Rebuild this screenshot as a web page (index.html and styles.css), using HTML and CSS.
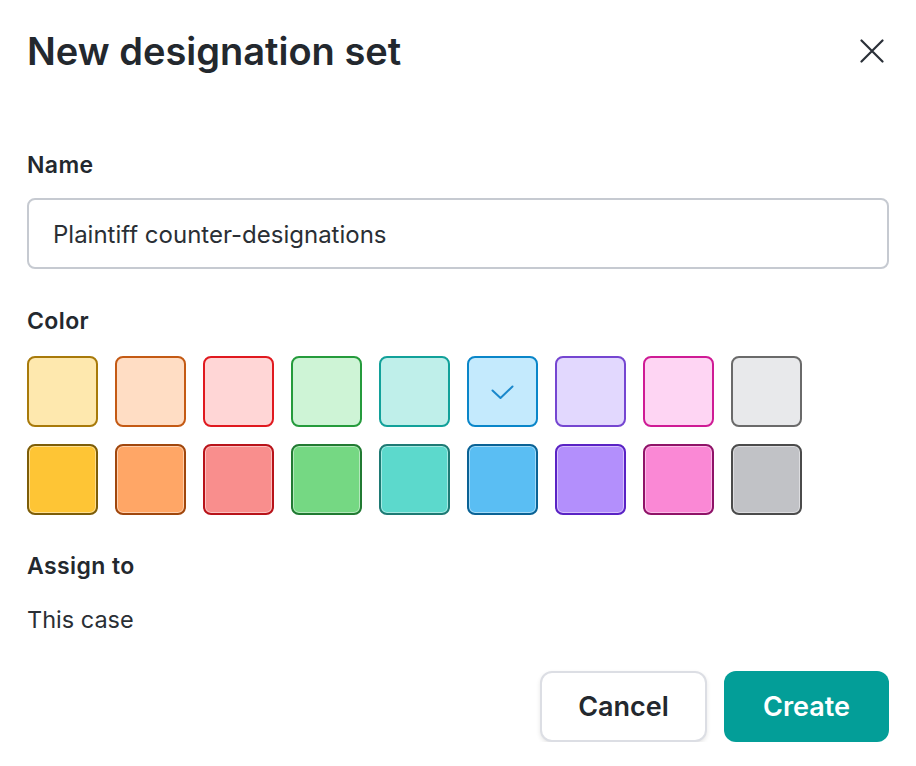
FILE: index.html
```html
<!DOCTYPE html>
<html lang="en">
<head>
<meta charset="utf-8">
<title>New designation set</title>
<link rel="stylesheet" href="styles.css">
</head>
<body>
<div class="dialog">
  <div class="header">
    <h1 class="title">New designation set</h1>
    <button class="close" aria-label="Close">
      <svg width="24" height="24" viewBox="0 0 24 24"><path d="M1.5 1.5 L22.5 22.5 M22.5 1.5 L1.5 22.5" stroke="#2a3038" stroke-width="2.2" stroke-linecap="round" fill="none"/></svg>
    </button>
  </div>

  <div class="label label-name">Name</div>
  <div class="input">Plaintiff counter-designations</div>

  <div class="label label-color">Color</div>
  <div class="swatches">
    <div class="sw l1"></div>
    <div class="sw l2"></div>
    <div class="sw l3"></div>
    <div class="sw l4"></div>
    <div class="sw l5"></div>
    <div class="sw l6 selected">
      <svg class="check" width="24" height="16" viewBox="0 0 24 16"><path d="M1.5 6.5 L9.5 14 L21.5 2.5" stroke="#1a88cc" stroke-width="2" fill="none" stroke-linecap="round" stroke-linejoin="round"/></svg>
    </div>
    <div class="sw l7"></div>
    <div class="sw l8"></div>
    <div class="sw l9"></div>
    <div class="sw d1"></div>
    <div class="sw d2"></div>
    <div class="sw d3"></div>
    <div class="sw d4"></div>
    <div class="sw d5"></div>
    <div class="sw d6"></div>
    <div class="sw d7"></div>
    <div class="sw d8"></div>
    <div class="sw d9"></div>
  </div>

  <div class="label label-assign">Assign to</div>
  <div class="value">This case</div>

  <div class="actions">
    <button class="btn cancel">Cancel</button>
    <button class="btn create">Create</button>
  </div>
</div>
</body>
</html>
```

FILE: styles.css
```css
* { box-sizing: border-box; }
html, body { margin: 0; padding: 0; background: #ffffff; }
body {
  font-family: Inter, "Noto Sans", "Liberation Sans", sans-serif;
  color: #23282e;
}
.dialog {
  width: 916px;
  padding: 0 27px;
}
.header {
  height: 101px;
  display: flex;
  align-items: center;
  justify-content: space-between;
}
.title {
  margin: 0;
  font-size: 38px;
  line-height: 1;
  font-weight: 600;
  letter-spacing: 0;
}
.close {
  border: 0;
  background: none;
  padding: 0;
  margin-right: 5px;
  width: 24px;
  height: 24px;
  display: flex;
}
.label {
  font-size: 23px;
  line-height: 24px;
  font-weight: 600;
  letter-spacing: 0.4px;
  margin-bottom: 23px;
}
.label-name { margin-top: 52px; margin-bottom: 21px; }
.label-color { margin-top: 40px; }
.label-assign { margin-top: 39px; margin-bottom: 29px; }
.input {
  height: 71px;
  border: 2px solid #c6cad1;
  border-radius: 8px;
  padding: 2px 24px 0;
  display: flex;
  align-items: center;
  font-size: 24px;
  color: #2a2f35;
}
.swatches {
  display: grid;
  grid-template-columns: repeat(9, 71px);
  grid-auto-rows: 71px;
  column-gap: 17px;
  row-gap: 17px;
}
.sw {
  border: 2px solid;
  border-radius: 8px;
  display: flex;
  align-items: center;
  justify-content: center;
}
.l1 { background: #fee8ae; border-color: #a87a0a; }
.l2 { background: #ffddc4; border-color: #c45a14; }
.l3 { background: #ffd6d6; border-color: #e0191f; }
.l4 { background: #cef4d6; border-color: #259b3c; }
.l5 { background: #bfefea; border-color: #12a19a; }
.l6 { background: #c4eafd; border-color: #0a86c9; }
.l7 { background: #e2d8fe; border-color: #7546d1; }
.l8 { background: #fed5f3; border-color: #cf1b95; }
.l9 { background: #e8e9eb; border-color: #6a6a6a; }
.d1, .d2, .d3, .d4, .d5, .d6, .d7, .d8, .d9 {
  box-shadow: inset 0 0 0 1px rgba(255, 255, 255, 0.45);
}
.d1 { background: #fec535; border-color: #7d5d08; }
.d2 { background: #ffa666; border-color: #a0470d; }
.d3 { background: #f98e8d; border-color: #b8131a; }
.d4 { background: #75d883; border-color: #217a32; }
.d5 { background: #5cd9cc; border-color: #1e7a74; }
.d6 { background: #5abef3; border-color: #0a6295; }
.d7 { background: #b38ffc; border-color: #5a23c4; }
.d8 { background: #fa88d5; border-color: #8f1368; }
.d9 { background: #c1c2c6; border-color: #4b4b4b; }
.value {
  font-size: 23.5px;
  line-height: 26px;
  color: #2a2f35;
}
.actions {
  margin-top: 38px;
  display: flex;
  justify-content: flex-end;
  gap: 17px;
}
.btn {
  height: 71px;
  border-radius: 12px;
  font-family: Inter, "Noto Sans", "Liberation Sans", sans-serif;
  font-size: 27px;
  font-weight: 600;
  padding: 0;
}
.cancel {
  width: 167px;
  background: #ffffff;
  color: #23282e;
  border: 2px solid #dcdee4;
  box-shadow: 0 2px 4px rgba(0, 0, 0, 0.10);
}
.create {
  width: 165px;
  background: #039e98;
  color: #ffffff;
  border: 0;
}
```
